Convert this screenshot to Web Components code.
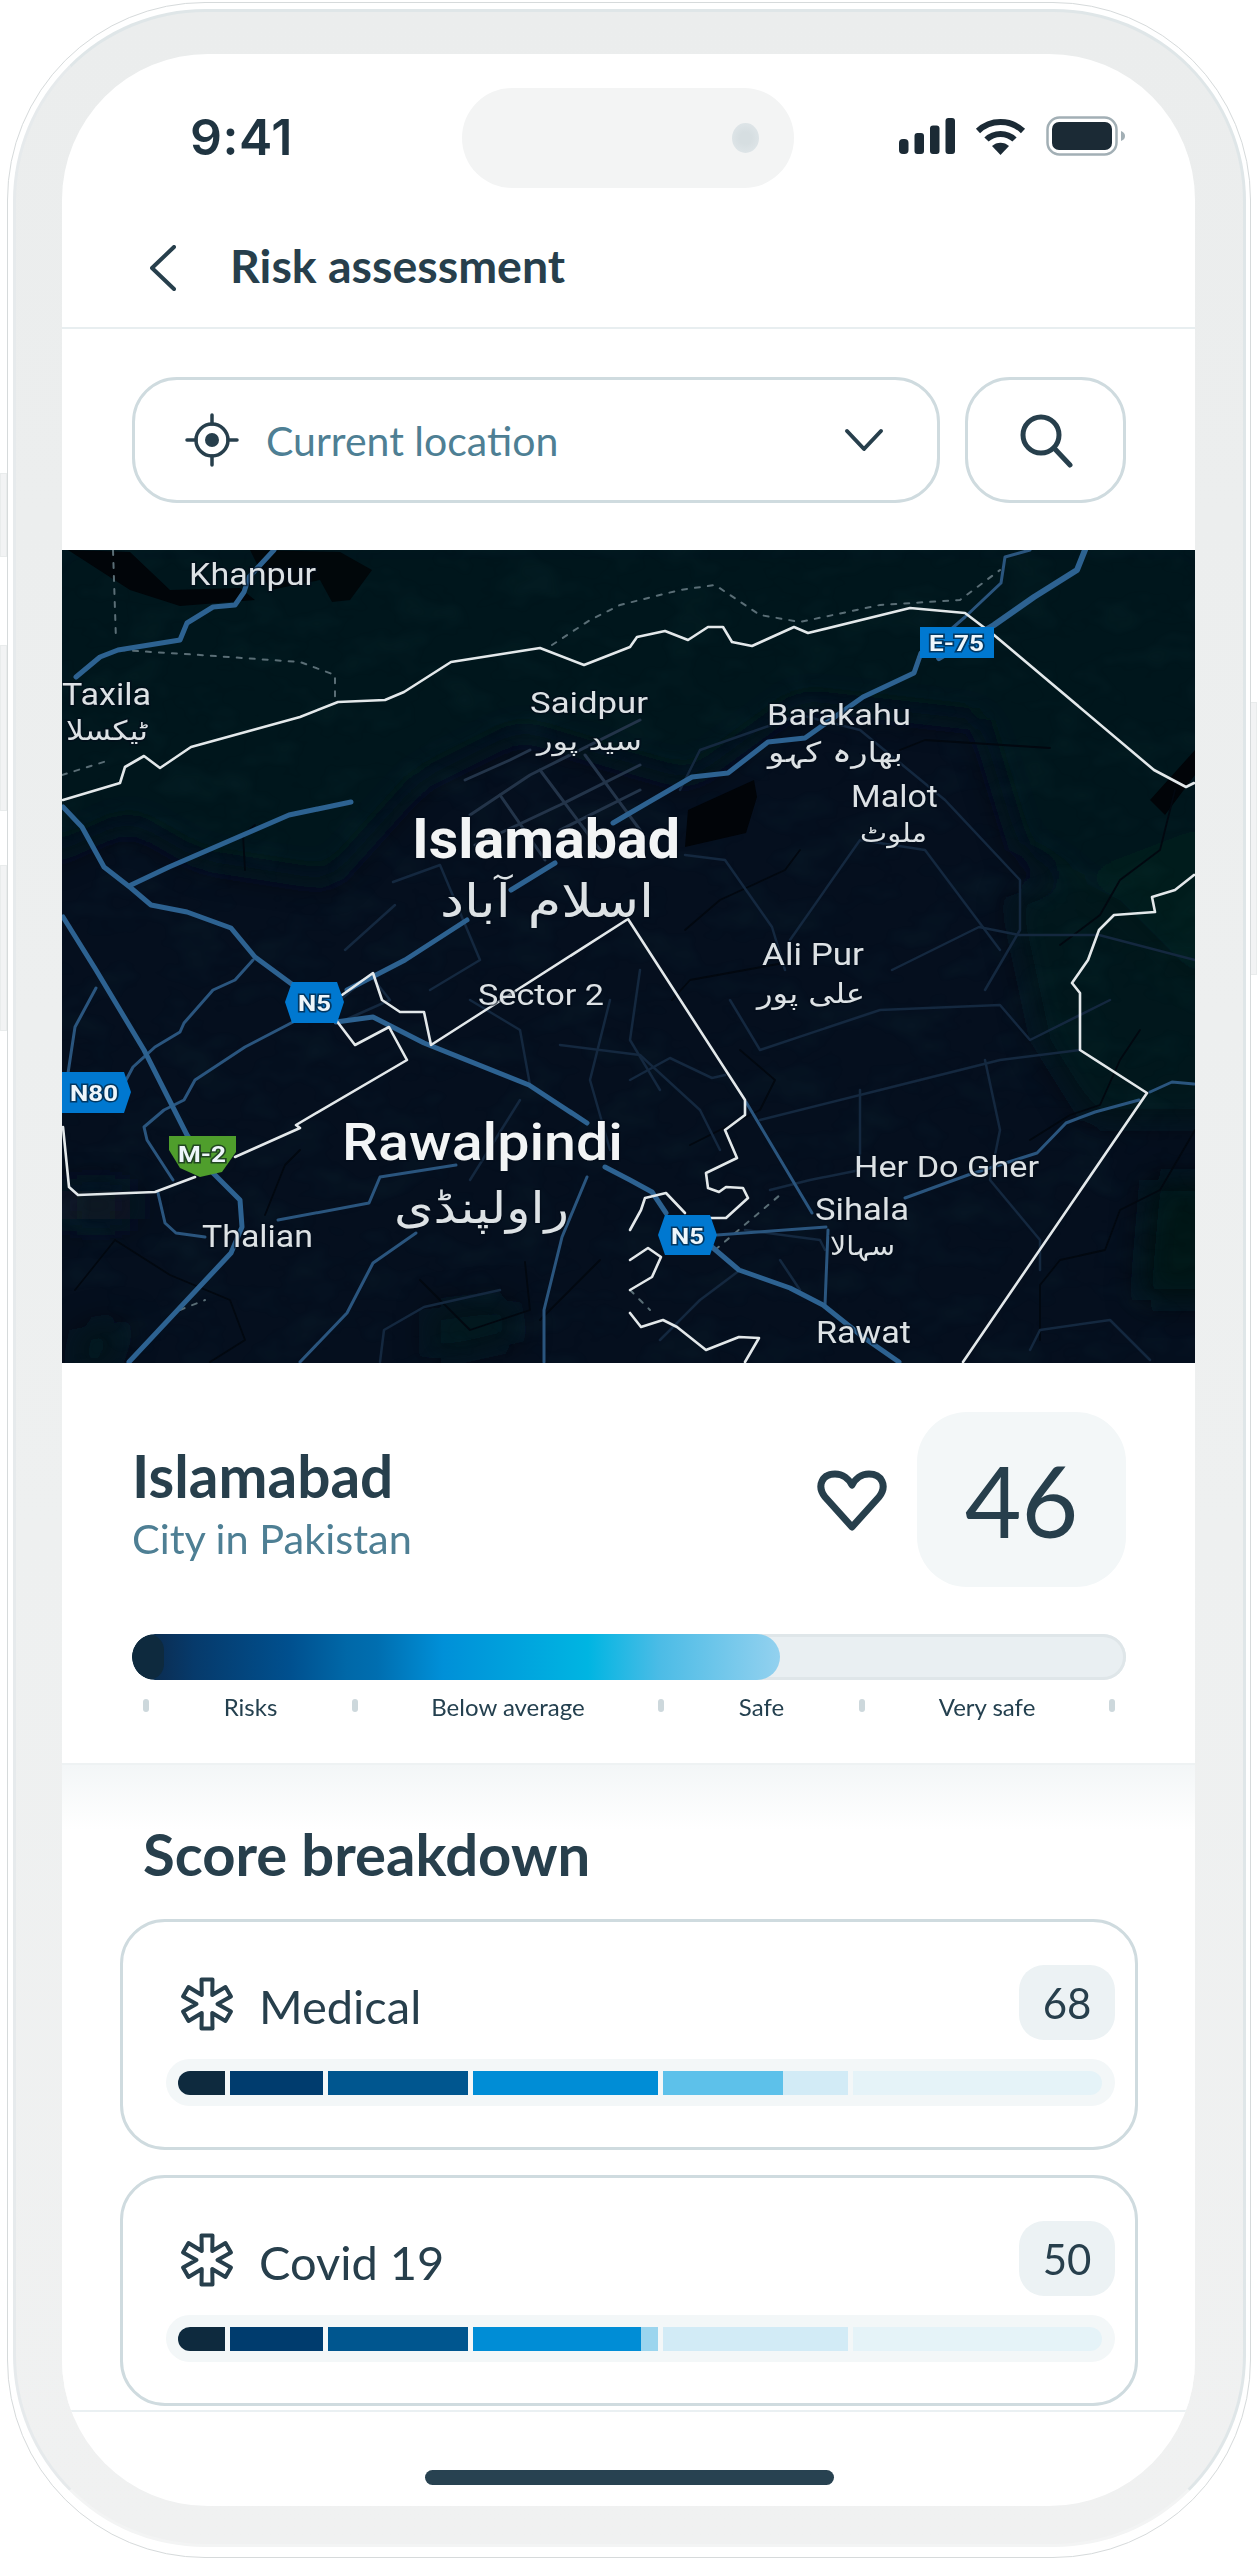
<!DOCTYPE html>
<html lang="en">
<head>
<meta charset="utf-8">
<title>Risk assessment</title>
<style>
  html, body { margin: 0; padding: 0; background: #fff; }
  body { font-family: "Lato", "Liberation Sans", sans-serif; color: #273f4c; }
</style>
</head>
<body>
<phone-frame>
  <status-bar></status-bar>
  <app-bar>Risk assessment</app-bar>
  <location-search>Current location</location-search>
  <risk-map></risk-map>
  <place-summary name="Islamabad" kind="City in Pakistan" score="46" fill="648"></place-summary>
  <score-section heading="Score breakdown">
    <score-card score="68" fills="100,100,100,100,65,0">Medical</score-card>
    <score-card score="50" fills="100,100,100,91,0,0">Covid 19</score-card>
  </score-section>
  <home-bar></home-bar>
</phone-frame>

<script>
const ink = '#273f4c'

class PhoneFrame extends HTMLElement {
    constructor() {
        super()
        this.attachShadow({ mode: 'open' })
        this.shadowRoot.innerHTML = `
        <style>
            :host { display: block; position: relative; width: 1244px; height: 2556px; margin: 2px 0 0 7px; }
            .key { position: absolute; width: 7px; background: #f2f3f4; border: 1px solid #e9ecec; box-sizing: border-box; }
            .edge { height: 100%; box-sizing: border-box; border: 1px solid #d6dadb; border-radius: 198px; padding: 6px 4px 10px 5px; background: #fff; position: relative; }
            .body { height: 100%; box-sizing: border-box; border-radius: 192px; background: linear-gradient(#ebeded, #eef0f0 60%, #f0f1f1);
                    border: 3px solid #dfe6e8; border-bottom-color: #f3f4f4; border-left-color: #e6eaec; padding: 42px 48px 34px 46px; }
            .screen { height: 2452px; width: 1133px; background: #fff; border-radius: 146px; overflow: hidden; display: flex; flex-direction: column; }
        </style>
        <div class="key" style="left:-7px;top:471px;height:84px"></div>
        <div class="key" style="left:-7px;top:643px;height:166px"></div>
        <div class="key" style="left:-7px;top:863px;height:166px"></div>
        <div class="key" style="right:-6px;top:700px;height:273px"></div>
        <div class="edge"><div class="body"><div class="screen"><slot></slot></div></div></div>`
    }
}

class StatusBar extends HTMLElement {
    constructor() {
        super()
        this.attachShadow({ mode: 'open' })
        this.shadowRoot.innerHTML = `
        <style>
            :host { display: flex; height: 161px; box-sizing: border-box; padding: 34px 69px 0 128px; flex: none; }
            .time { width: 272px; font: 600 50px/1 "Inter", "Liberation Sans", sans-serif; color: #1f3441; padding-top: 24px; box-sizing: border-box; letter-spacing: 0.5px; }
            .island { width: 332px; height: 100px; border-radius: 50px; background: #f3f4f4; display: flex; align-items: center; justify-content: flex-end; padding-right: 35px; box-sizing: border-box; }
            .cam { width: 27px; height: 30px; border-radius: 50%; background: radial-gradient(circle at 50% 50%, #d6dee1 30%, #dde4e7 70%); }
            .icons { margin-left: auto; display: flex; gap: 20px; padding-top: 30px; align-items: flex-start; }
            svg { display: block; }
        </style>
        <div class="time">9:41</div>
        <div class="island"><div class="cam"></div></div>
        <div class="icons">
            <svg width="56" height="36" viewBox="0 0 56 36" fill="#1b2a35">
                <rect x="0" y="21" width="9.5" height="15" rx="4"/>
                <rect x="15.5" y="15" width="9.5" height="21" rx="3"/>
                <rect x="31" y="7.5" width="9.5" height="28.5" rx="3"/>
                <rect x="46.5" y="0" width="9.5" height="36" rx="3"/>
            </svg>
            <svg width="51" height="37" viewBox="0 0 51 37" fill="none" stroke="#1b2a35" stroke-width="6">
                <path d="M3 13C15.500 1 35.500 1 48 13"/>
                <path d="M11.500 21.500C19 14 32 14 39.500 21.500"/>
                <path d="M25.500 37L17 28C21.500 23.500 29.500 23.500 34 28Z" fill="#1b2a35" stroke="none"/>
            </svg>
            <svg width="80" height="40" viewBox="0 0 80 40" style="margin-top:-2px">
                <rect x="1.500" y="1.500" width="69" height="37" rx="12" fill="none" stroke="#a2afb5" stroke-width="2.500"/>
                <rect x="6" y="6" width="60" height="28" rx="7" fill="#1b2a35"/>
                <path d="M75 15C78 16 79 18 79 20C79 22 78 24 75 25Z" fill="#a2afb5"/>
            </svg>
        </div>`
    }
}

class AppBar extends HTMLElement {
    constructor() {
        super()
        this.attachShadow({ mode: 'open' })
        this.shadowRoot.innerHTML = `
        <style>
            :host { display: flex; align-items: center; height: 114px; box-sizing: border-box; padding: 0 0 0 88px; border-bottom: 2px solid #e8eef0; flex: none; color: ${ink}; }
            svg { display: block; margin-right: 54px; margin-top: -6px; }
            .title { font: 700 46.500px/1 "Lato", "Liberation Sans", sans-serif; margin-top: -12px; }
        </style>
        <svg width="26" height="46" viewBox="0 0 26 46" fill="none" stroke="${ink}" stroke-width="4" stroke-linecap="round" stroke-linejoin="round">
            <path d="M24 2L2 23L24 44"/>
        </svg>
        <div class="title"><slot></slot></div>`
    }
}

class LocationSearch extends HTMLElement {
    constructor() {
        super()
        this.attachShadow({ mode: 'open' })
        this.shadowRoot.innerHTML = `
        <style>
            :host { display: flex; gap: 25px; height: 221px; box-sizing: border-box; padding: 48px 69px 47px 70px; flex: none; }
            .box { border: 3px solid #cfdbdf; border-radius: 45px; box-sizing: border-box; height: 126px; display: flex; align-items: center; background: #fff; }
            .select { width: 808px; padding: 0 53px 0 49px; }
            .label { flex: 1; font: 400 41px/1 "Lato", "Liberation Sans", sans-serif; color: #4e7f94; margin: 0 0 0 26px; }
            .find { width: 161px; justify-content: center; }
            svg { display: block; }
        </style>
        <div class="box select">
            <svg width="56" height="56" viewBox="0 0 56 56" fill="none" stroke="${ink}" stroke-width="3.500" stroke-linecap="round">
                <circle cx="28" cy="28" r="16"/>
                <circle cx="28" cy="28" r="7" fill="${ink}" stroke="none"/>
                <path d="M28 3V12M28 44V53M3 28H12M44 28H53"/>
            </svg>
            <div class="label"><slot></slot></div>
            <svg width="40" height="24" viewBox="0 0 40 24" fill="none" stroke="${ink}" stroke-width="4" stroke-linecap="round" stroke-linejoin="round">
                <path d="M3 3L20 21L37 3"/>
            </svg>
        </div>
        <div class="box find">
            <svg width="56" height="56" viewBox="0 0 56 56" fill="none" stroke="${ink}" stroke-width="5" stroke-linecap="round">
                <circle cx="23" cy="23" r="18"/>
                <path d="M36 36L52 53"/>
            </svg>
        </div>`
    }
}

class RiskMap extends HTMLElement {
    place(x, y, w, size, text, weight) {
        const fill = weight ? '#f2f4f5' : '#dde2e5'
        return `<text x="${x}" y="${y}" font-size="${size}" font-weight="${weight || 400}" fill="${fill}" textLength="${w}" lengthAdjust="spacingAndGlyphs">${text}</text>`
    }
    urdu(x, y, w, size, text) {
        return `<text x="${x}" y="${y}" font-size="${size}" fill="#dde2e5" class="ur" textLength="${w}" lengthAdjust="spacingAndGlyphs">${text}</text>`
    }
    sign(points, fill, tx, ty, text, w) {
        return `<polygon points="${points}" fill="${fill}"/><text x="${tx}" y="${ty}" font-size="22" font-weight="700" fill="#eef6fb" textLength="${w}" lengthAdjust="spacingAndGlyphs">${text}</text>`
    }
    constructor() {
        super()
        this.attachShadow({ mode: 'open' })
        this.shadowRoot.innerHTML = `
        <style>
            :host { display: block; height: 813px; flex: none; background: #050f1e; overflow: hidden; }
            svg { display: block; width: 1133px; height: 813px; }
            text { font-family: "Roboto", "Liberation Sans", sans-serif; paint-order: stroke; stroke: rgba(4,14,26,.6); stroke-width: 3px; }
            .ur { font-family: "DejaVu Sans", "Noto Sans", sans-serif; }
            polyline { fill: none; stroke-linejoin: round; stroke-linecap: round; }
            .thick polyline { stroke: #2d6291; stroke-width: 5; }
            .mid polyline { stroke: #2a557e; stroke-width: 3; }
            .dim polyline { stroke: #14283f; stroke-width: 2.500; }
            .grid polyline { stroke: #233449; stroke-width: 3; }
            .river polyline { stroke: #020810; stroke-width: 1.800; }
            .dash polyline { stroke: #5a6e76; stroke-width: 2; stroke-dasharray: 5 8; }
            .white polyline { stroke: #e3e8ea; stroke-width: 2.600; }
        </style>
        <svg viewBox="62 550 1133 813" preserveAspectRatio="none">
            <defs>
                <filter id="soft" x="-10%" y="-10%" width="120%" height="120%"><feGaussianBlur stdDeviation="16"/></filter>
                <filter id="terrain" x="0" y="0" width="100%" height="100%">
                    <feTurbulence type="fractalNoise" baseFrequency=".018 .03" numOctaves="3" seed="7"/>
                    <feColorMatrix values="0 0 0 0 .03  0 0 0 0 .17  0 0 0 0 .18  0 0 0 1.600 -.7"/>
                </filter>
            </defs>
            <rect x="62" y="550" width="1133" height="813" fill="#050f1e"/>
            <g filter="url(#soft)">
                <polygon points="40,530 1220,530 1220,1000 1120,900 1020,850 980,720 800,700 690,780 620,760 520,730 420,780 330,880 200,860 130,820 40,860" fill="#04191f"/>
                <polygon points="1010,900 1220,820 1220,1120 1090,1120 1040,1040" fill="#041d20" opacity=".7"/>
                <polygon points="1150,1180 1220,1180 1220,1300 1140,1300" fill="#041519"/>
                <polygon points="430,1310 510,1300 520,1340 430,1360" fill="#041a1e" opacity=".7"/>
                <polygon points="80,1330 130,1320 110,1370 70,1370" fill="#041a1e" opacity=".7"/>
                <polygon points="62,1190 130,1190 130,1220 62,1220" fill="#0e1b25"/>
            </g>
            <rect x="62" y="550" width="1133" height="813" filter="url(#terrain)" opacity=".09"/>
            <polygon points="68,550 130,552 170,590 240,588 255,600 180,606 130,590" fill="#010509"/>
            <polygon points="250,550 340,552 372,570 350,600 332,602 320,580 270,590" fill="#010509" opacity=".9"/>
            <polygon points="688,810 754,780 757,797 746,833 685,847" fill="#010408"/>
            <polygon points="1150,800 1195,750 1195,775 1165,815" fill="#010408"/>
            <g class="river">
                <polyline points="245,870 243,835 255,825"/><polyline points="900,750 925,740 1050,748"/>
                <polyline points="685,930 720,900 785,870 800,850"/><polyline points="672,1000 690,980 800,960"/>
                <polyline points="1175,790 1160,850 1120,880 1100,915 1060,945"/>
                <polyline points="1030,1140 1070,1115 1100,1105 1120,1060 1140,1030"/>
                <polyline points="1195,1130 1160,1190 1120,1210 1105,1250 1060,1260 1040,1285 1040,1340"/>
                <polyline points="75,1290 115,1240 170,1275 230,1300 245,1340 210,1362"/>
                <polyline points="265,1215 285,1165 300,1150"/><polyline points="420,1280 470,1330 530,1310 525,1262"/>
                <polyline points="740,1050 775,1080 760,1110 690,1145"/><polyline points="600,1260 540,1320"/>
            </g>
            <g class="dash">
                <polyline points="113,550 116,640"/><polyline points="120,650 200,655 300,662 335,675 335,700"/>
                <polyline points="62,775 110,760"/><polyline points="552,645 590,620 620,605 680,590 715,585 760,615 800,622 880,605 960,600 1000,570"/>
                <polyline points="180,1310 205,1300"/><polyline points="630,1290 650,1310"/><polyline points="715,1250 780,1195"/>
            </g>
            <g class="dim">
                <polyline points="393,882 440,865 480,960 430,990"/><polyline points="345,950 395,905"/><polyline points="340,1000 370,975 390,1000 345,1020"/>
                <polyline points="685,855 725,860 772,927 785,970"/><polyline points="680,790 700,750 800,715 860,730 945,800 1020,880 1020,930 985,990"/>
                <polyline points="790,940 860,840 925,850 1000,950"/><polyline points="892,970 979,927 1019,935 1099,935 1195,960"/>
                <polyline points="730,1000 760,1050 880,1010 1000,1005 1030,1040 1110,1000"/>
                <polyline points="630,1080 670,1058 712,1078 725,1075"/><polyline points="760,1120 880,1090 1000,1060 1080,1050"/>
                <polyline points="860,1090 860,1170 810,1180 770,1190"/><polyline points="985,1060 1000,1130 990,1180 1040,1240 1040,1270"/>
                <polyline points="560,1045 640,1055 700,1110 720,1150"/><polyline points="520,1100 470,1180"/><polyline points="610,1000 590,1080 610,1150"/>
                <polyline points="470,1000 520,1030 530,1085"/><polyline points="640,970 630,1040 660,1090"/>
                <polyline points="1030,1350 1040,1330 1110,1320 1150,1360"/><polyline points="660,1340 700,1300 740,1270"/>
                <polyline points="745,1230 820,1240 825,1250"/><polyline points="780,1260 800,1290"/>
                <polyline points="380,1362 384,1330 424,1307 500,1290"/>
            </g>
            <g class="grid">
                <polyline points="470,815 530,775 640,720"/><polyline points="475,845 560,805 640,765"/>
                <polyline points="500,795 545,860"/><polyline points="540,770 600,850"/><polyline points="585,755 640,830"/>
                <polyline points="465,780 510,760 530,750"/><polyline points="560,830 640,790"/>
            </g>
            <g class="mid">
                <polyline points="293,1022 245,1047 195,1080 184,1100 164,1110 144,1127 147,1140 173,1180"/>
                <polyline points="253,960 235,980 213,990 184,1023 180,1032 155,1047 133,1067 125,1082"/>
                <polyline points="96,988 75,1027 65,1093"/>
                <polyline points="158,1193 165,1223 176,1233 205,1237"/>
                <polyline points="278,1220 369,1203 380,1177 456,1165"/>
                <polyline points="300,1362 347,1313 373,1263 416,1233"/>
                <polyline points="544,1362 544,1310 562,1237 587,1177"/>
                <polyline points="1150,1092 1172,1082 1194,1084"/>
                <polyline points="1139,1100 1095,1112 1066,1123 1037,1153 968,1175 905,1198"/>
                <polyline points="828,1230 825,1305"/>
                <polyline points="717,1235 826,1227"/>
                <polyline points="746,1102 812,1213"/>
                <polyline points="919,657 965,617 1001,583 1005,557 1030,550"/>
            </g>
            <g class="thick">
                <polyline points="76,677 100,657 118,650 180,640 187,623 213,607 235,605 244,592 249,577 274,550"/>
                <polyline points="63,807 82,827 104,867 131,888 151,905 187,912 231,928 255,957 293,985"/>
                <polyline points="131,885 169,867 289,815 351,802"/>
                <polyline points="63,917 96,970 144,1050 187,1135 213,1173 240,1200 242,1227 231,1253 129,1362"/>
                <polyline points="336,1022 373,1017 424,1043 529,1085 587,1123"/>
                <polyline points="605,1167 630,1180 652,1192 666,1213"/>
                <polyline points="712,1247 739,1270 790,1288 823,1305 863,1337 899,1362"/>
                <polyline points="347,990 405,960 467,920"/><polyline points="511,890 555,863"/>
                <polyline points="613,823 630,813 692,777 728,773 768,742 805,738 863,697 914,673 921,653"/>
                <polyline points="939,658 994,625 1034,597 1077,570 1085,550" style="stroke-width:6"/>
            </g>
            <g class="white">
                <polyline points="63,800 120,783 125,767 144,756 160,768 191,747 300,717 338,702 385,700 404,692 451,662 540,648 584,665 630,647 637,637 665,631 688,640 708,627 723,627 732,642 752,646 794,627 808,633 910,608 965,613 994,635 1154,770 1186,787 1194,783"/>
                <polyline points="1194,875 1175,890 1152,897 1155,912 1114,915 1099,930 1088,960 1072,983 1080,993 1080,1050 1147,1093 963,1362"/>
                <polyline points="342,995 373,973 382,1000 400,1012 424,1012 431,1045 628,919 745,1100 745,1115 725,1130 737,1158 706,1173 708,1188 719,1192 726,1187 743,1188 748,1198 726,1218 710,1218"/>
                <polyline points="336,1020 355,1045 389,1027 407,1060 296,1125 300,1128 235,1157"/>
                <polyline points="195,1177 155,1192 78,1195 69,1187 63,1127"/>
                <polyline points="685,1213 666,1193 645,1198 641,1210 630,1230"/>
                <polyline points="630,1260 648,1248 661,1257 652,1277 630,1290"/>
                <polyline points="630,1313 641,1327 663,1320 677,1327 706,1350 739,1337 759,1338 745,1362"/>
            </g>
            ${this.sign('920,627 994,627 994,658 920,658', '#0078d0', 929, 651, 'E-75', 55)}
            ${this.sign('292,982 337,982 344,1002 337,1023 292,1023 285,1002', '#0078d0', 298, 1011, 'N5', 33)}
            ${this.sign('62,1072 124,1072 131,1092 124,1113 62,1113 62,1092', '#0078d0', 70, 1101, 'N80', 48)}
            ${this.sign('169,1136 236,1136 236,1152 222,1172 200,1177 180,1168 169,1150', '#4f9e2c', 178, 1162, 'M-2', 48)}
            ${this.sign('665,1215 710,1215 717,1235 710,1255 665,1255 658,1235', '#0078d0', 671, 1244, 'N5', 33)}
            ${this.place(189, 585, 127, 31, 'Khanpur')}
            ${this.place(62, 705, 89, 31, 'Taxila')}
            ${this.urdu(66, 740, 82, 27, 'ٹیکسلا')}
            ${this.place(530, 713, 118, 30, 'Saidpur')}
            ${this.urdu(537, 750, 105, 26, 'سید پور')}
            ${this.place(767, 725, 144, 30, 'Barakahu')}
            ${this.urdu(768, 762, 135, 28, 'بھارہ کہو')}
            ${this.place(851, 807, 87, 31, 'Malot')}
            ${this.urdu(860, 842, 67, 26, 'ملوٹ')}
            ${this.place(412, 858, 268, 56, 'Islamabad', 700)}
            ${this.urdu(440, 917, 214, 46, 'اسلام آباد')}
            ${this.place(478, 1005, 126, 29, 'Sector 2')}
            ${this.place(762, 965, 102, 31, 'Ali Pur')}
            ${this.urdu(757, 1003, 108, 28, 'علی پور')}
            ${this.place(342, 1160, 281, 52, 'Rawalpindi', 500)}
            ${this.urdu(394, 1223, 175, 44, 'راولپنڈی')}
            ${this.place(854, 1177, 185, 30, 'Her Do Gher')}
            ${this.place(815, 1220, 94, 31, 'Sihala')}
            ${this.urdu(830, 1255, 65, 26, 'سہالا')}
            ${this.place(816, 1343, 95, 31, 'Rawat')}
            ${this.place(202, 1247, 111, 31, 'Thalian')}
        </svg>`
    }
}

class PlaceSummary extends HTMLElement {
    static get observedAttributes() {
        return ['name', 'kind', 'score', 'fill']
    }
    connectedCallback() {
        this.render()
    }
    attributeChangedCallback() {
        if (this.shadowRoot) this.render()
    }
    constructor() {
        super()
        this.attachShadow({ mode: 'open' })
    }
    render() {
        const stops = [[209, 'Risks'], [306, 'Below average'], [201, 'Safe'], [250, 'Very safe']]
        this.shadowRoot.innerHTML = `
        <style>
            :host { display: block; height: 402px; box-sizing: border-box; padding: 49px 69px 0 70px; border-bottom: 2px solid #eef2f3; flex: none; color: ${ink}; }
            .top { display: flex; align-items: flex-start; height: 175px; }
            .names { flex: 1; padding-top: 29px; }
            .name { font: 700 58.500px/68px "Lato", "Liberation Sans", sans-serif; }
            .kind { font: 400 41.500px/48px "Lato", "Liberation Sans", sans-serif; color: #4e7f94; margin-top: 5px; }
            svg { display: block; margin: 58px 29px 0 0; }
            .score { width: 209px; height: 175px; border-radius: 50px; background: #f3f7f8; display: flex; align-items: center; justify-content: center; font: 400 98px/1 "Lato", "Liberation Sans", sans-serif; }
            .track { margin-top: 47px; height: 46px; width: 994px; border-radius: 23px; background: #e9eff2; box-shadow: inset 0 0 0 3px #dfe6e9; position: relative; overflow: hidden; }
            .fill { height: 100%; border-radius: 23px; position: relative; overflow: hidden;
                    background: linear-gradient(90deg, #0e2a3e 0, #0a3058 32px, #063a6b 62px, #00508f 158px, #0068a8 215px, #006eb0 245px, #0090d8 311px, #00b5e2 456px, #4cbce6 528px, #93d1ef 648px); }
            .cap { position: absolute; left: 0; top: 0; width: 32px; height: 100%; border-radius: 23px; background: #0e2a3e; }
            .scale { display: flex; align-items: center; margin: 14px 0 0 11px; height: 26px; font: 400 24px/26px "Lato", "Liberation Sans", sans-serif; color: #24404f; }
            .tick { width: 6px; height: 13px; border-radius: 3px; background: #cdd8dc; flex: none; margin-top: -4px; }
            .stop { text-align: center; flex: none; margin-top: 0; }
        </style>
        <div class="top">
            <div class="names">
                <div class="name">${this.getAttribute('name')}</div>
                <div class="kind">${this.getAttribute('kind')}</div>
            </div>
            <svg width="72" height="62" viewBox="0 0 72 62" fill="none" stroke="${ink}" stroke-width="7" stroke-linejoin="round">
                <path d="M36 57L9 27C0 15 7 4 19 4C27 4 33 9 36 15C39 9 45 4 53 4C65 4 72 15 63 27Z"/>
            </svg>
            <div class="score">${this.getAttribute('score')}</div>
        </div>
        <div class="track"><div class="fill" style="width:${this.getAttribute('fill')}px"><div class="cap"></div></div></div>
        <div class="scale">
            <div class="tick"></div>
            ${stops.map(s => `<div class="stop" style="width:${s[0] - 6}px">${s[1]}</div><div class="tick"></div>`).join('')}
        </div>`
    }
}

class ScoreSection extends HTMLElement {
    constructor() {
        super()
        this.attachShadow({ mode: 'open' })
    }
    connectedCallback() {
        this.shadowRoot.innerHTML = `
        <style>
            :host { display: flex; flex-direction: column; height: 647px; box-sizing: border-box; padding: 0 57px 0 58px; flex: none; gap: 25px;
                    background: linear-gradient(#f3f6f7, #fff 65px); border-bottom: 2px solid #eaf0f2; color: ${ink}; }
            h2 { margin: 57px 0 8px 23px; font: 700 58px/64px "Lato", "Liberation Sans", sans-serif; height: 64px; }
        </style>
        <h2>${this.getAttribute('heading')}</h2>
        <slot></slot>`
    }
}

class ScoreCard extends HTMLElement {
    constructor() {
        super()
        this.attachShadow({ mode: 'open' })
    }
    connectedCallback() {
        const widths = [47, 93.500, 139.600, 185.500, 185, 249]
        const full = ['#0e2a3e', '#003c6e', '#00568f', '#008dd6', '#5dc1ea', '#5dc1ea']
        const rest = ['#0e2a3e', '#003c6e', '#00568f', '#9bd5ee', '#d2ebf6', '#e5f3f8']
        const fills = this.getAttribute('fills').split(',').map(Number)
        const star = []
        for (let i = 0; i < 6; i++) {
            const a = (i * 60 - 90) * Math.PI / 180
            const r = 24.500, w = 5.500, c = 10.500
            const ox = Math.cos(a), oy = Math.sin(a), px = -oy, py = ox
            const b = a + Math.PI / 6
            star.push(`${(28 + r * ox - w * px).toFixed(2)},${(28 + r * oy - w * py).toFixed(2)}`)
            star.push(`${(28 + r * ox + w * px).toFixed(2)},${(28 + r * oy + w * py).toFixed(2)}`)
            star.push(`${(28 + c * Math.cos(b)).toFixed(2)},${(28 + c * Math.sin(b)).toFixed(2)}`)
        }
        this.shadowRoot.innerHTML = `
        <style>
            :host { display: block; height: 231px; box-sizing: border-box; border: 3px solid #cfdbdf; border-radius: 45px; padding: 42px 20px 0 43px; background: #fff; position: relative; flex: none; }
            .row { display: flex; align-items: center; height: 92px; margin-bottom: 0; }
            svg { display: block; margin: -12px 0 0 13px; }
            .label { flex: 1; font: 400 47px/1 "Lato", "Liberation Sans", sans-serif; margin: -8px 0 0 24px; }
            .badge { width: 96px; height: 75px; border-radius: 25px; background: #ecf2f4; display: flex; align-items: center; justify-content: center; font: 400 42px/1 "Lato", "Liberation Sans", sans-serif; margin-top: -15px; }
            .track { height: 47px; border-radius: 24px; background: #f3f7f8; display: flex; gap: 5px; align-items: center; padding: 0 11.500px; box-sizing: border-box; width: 949px; margin-top: 3px; }
            .seg { height: 24px; flex: none; }
            .seg:first-child { border-radius: 12px 0 0 12px; }
            .seg:last-child { border-radius: 0 12px 12px 0; }
        </style>
        <div class="row">
            <svg width="56" height="56" viewBox="0 0 56 56" fill="none" stroke="${ink}" stroke-width="4" stroke-linejoin="round"><polygon points="${star.join(' ')}"/></svg>
            <div class="label"><slot></slot></div>
            <div class="badge">${this.getAttribute('score')}</div>
        </div>
        <div class="track">
            ${widths.map((w, i) => `<div class="seg" style="width:${w}px;background:linear-gradient(90deg,${full[i]} ${fills[i]}%,${rest[i]} ${fills[i]}%)"></div>`).join('')}
        </div>`
    }
}

class HomeBar extends HTMLElement {
    constructor() {
        super()
        this.attachShadow({ mode: 'open' })
        this.shadowRoot.innerHTML = `
        <style>
            :host { display: flex; justify-content: center; flex: 1; padding: 58px 0 0 2px; box-sizing: border-box; }
            div { width: 409px; height: 15px; border-radius: 8px; background: #284251; }
        </style>
        <div></div>`
    }
}

customElements.define('phone-frame', PhoneFrame)
customElements.define('status-bar', StatusBar)
customElements.define('app-bar', AppBar)
customElements.define('location-search', LocationSearch)
customElements.define('risk-map', RiskMap)
customElements.define('place-summary', PlaceSummary)
customElements.define('score-section', ScoreSection)
customElements.define('score-card', ScoreCard)
customElements.define('home-bar', HomeBar)
</script>
</body>
</html>
